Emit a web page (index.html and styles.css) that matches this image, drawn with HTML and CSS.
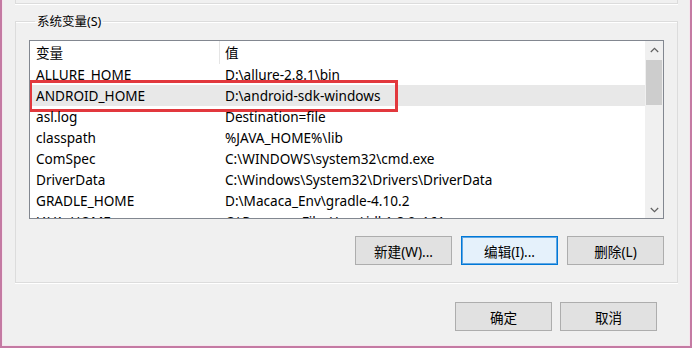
FILE: index.html
```html
<!DOCTYPE html>
<html lang="zh-CN">
<head>
<meta charset="utf-8">
<title>环境变量</title>
<link rel="stylesheet" href="styles.css">
</head>
<body>
<div class="window">
  <div class="prev-group"></div>
  <fieldset class="group">
    <legend class="group-title">系统变量(S)</legend>
    <div class="listview">
      <div class="list-body">
        <div class="row header">
          <div class="cell name">变量</div>
          <div class="cell value">值</div>
        </div>
        <div class="row"><div class="cell name">ALLURE_HOME</div><div class="cell value">D:\allure-2.8.1\bin</div></div>
        <div class="row selected"><div class="cell name">ANDROID_HOME</div><div class="cell value">D:\android-sdk-windows</div><div class="highlight"></div></div>
        <div class="row"><div class="cell name">asl.log</div><div class="cell value">Destination=file</div></div>
        <div class="row"><div class="cell name">classpath</div><div class="cell value">%JAVA_HOME%\lib</div></div>
        <div class="row"><div class="cell name">ComSpec</div><div class="cell value">C:\WINDOWS\system32\cmd.exe</div></div>
        <div class="row"><div class="cell name">DriverData</div><div class="cell value">C:\Windows\System32\Drivers\DriverData</div></div>
        <div class="row"><div class="cell name">GRADLE_HOME</div><div class="cell value">D:\Macaca_Env\gradle-4.10.2</div></div>
        <div class="row"><div class="cell name">JAVA_HOME</div><div class="cell value">C:\Program Files\Java\jdk1.8.0_161</div></div>
      </div>
      <div class="scrollbar">
        <div class="arrow">
          <svg width="9" height="6" viewBox="0 0 9 6"><path d="M0.8 5 L4.5 1.3 L8.2 5" fill="none" stroke="#606060" stroke-width="1.2"/></svg>
        </div>
        <div class="track">
          <div class="thumb"></div>
        </div>
        <div class="arrow">
          <svg width="9" height="6" viewBox="0 0 9 6"><path d="M0.8 1 L4.5 4.7 L8.2 1" fill="none" stroke="#606060" stroke-width="1.2"/></svg>
        </div>
      </div>
    </div>
    <div class="button-row">
      <button class="btn">新建(W)...</button>
      <button class="btn focused">编辑(I)...</button>
      <button class="btn">删除(L)</button>
    </div>
  </fieldset>
  <div class="dialog-buttons">
    <button class="btn">确定</button>
    <button class="btn">取消</button>
  </div>
</div>
</body>
</html>
```

FILE: styles.css
```css
* { box-sizing: border-box; }

html, body {
  margin: 0;
  padding: 0;
  background: #f0f0f0;
}

body {
  width: 692px;
  height: 348px;
  overflow: hidden;
  font-family: "Noto Sans", "Noto Sans CJK SC", sans-serif;
  font-size: 13.6px;
  color: #000;
}

.window {
  width: 692px;
  height: 348px;
  border-left: 2px solid #c47aa3;
  border-right: 2px solid #c47aa3;
  border-bottom: 2px solid #c47aa3;
  box-shadow: inset 1px 0 0 #f6e6ee, inset -1px 0 0 #f6e6ee, inset 0 -1px 0 #f6e6ee;
  background: #f0f0f0;
  display: flex;
  flex-direction: column;
}

.prev-group {
  height: 4px;
  margin: 0 12px 0 13px;
  border: 1px solid #dcdcdc;
  border-top: none;
  box-shadow: 0 1px 0 #fff;
}

.group {
  margin: 9px 12px 0 13px;
  padding: 0 13px 17px 13px;
  border: 1px solid #dcdcdc;
  box-shadow: 0 1px 0 #fff, inset 0 1px 0 #fff;
  min-width: 0;
}

.group-title {
  margin-left: 6px;
  padding: 0 2px;
  line-height: 17px;
  height: 17px;
  font-size: 12.5px;
  color: #000;
}

.listview {
  margin-top: 10px;
  height: 179px;
  border: 1px solid #828790;
  background: #fff;
  display: grid;
  grid-template-columns: 1fr 18px;
  position: relative;
}

.list-body {
  overflow: hidden;
  position: relative;
}

.row {
  display: flex;
  height: 21px;
  line-height: 21px;
  align-items: center;
  position: relative;
  white-space: nowrap;
}

.row.header {
  height: 23px;
}

.row.selected {
  background: #e8e8e8;
}

.cell {
  padding-left: 6px;
}

.cell.name {
  width: 190px;
  flex: none;
}

.cell.value {
  padding-left: 5px;
}

.row.header .cell.name {
  border-right: 1px solid #e5e5e5;
  height: 23px;
  line-height: 23px;
}

.highlight {
  position: absolute;
  left: -1px;
  top: -5px;
  width: 369px;
  height: 32px;
  border: 3px solid #e2383d;
  pointer-events: none;
}

.scrollbar {
  background: #f0f0f0;
  display: flex;
  flex-direction: column;
  width: 18px;
}

.arrow {
  height: 17px;
  display: flex;
  align-items: center;
  justify-content: center;
  flex: none;
}

.track {
  flex: 1;
  padding: 2px 1px 0 1px;
}

.thumb {
  height: 45px;
  background: #cdcdcd;
}

.button-row {
  margin-top: 17px;
  display: flex;
  justify-content: flex-end;
  gap: 9px;
}

.btn {
  width: 97px;
  height: 29px;
  border: 1px solid #adadad;
  background: #e1e1e1;
  font-family: "Noto Sans", "Noto Sans CJK SC", sans-serif;
  font-size: 13.6px;
  color: #000;
  padding: 0;
  margin: 0;
}

.btn.focused {
  border: 1px solid #0078d7;
  box-shadow: inset 0 0 0 1px #5fa6e3;
  background: #e5f1fb;
}

.dialog-buttons {
  margin-top: 19px;
  margin-right: 33px;
  display: flex;
  justify-content: flex-end;
  gap: 8px;
}
```
